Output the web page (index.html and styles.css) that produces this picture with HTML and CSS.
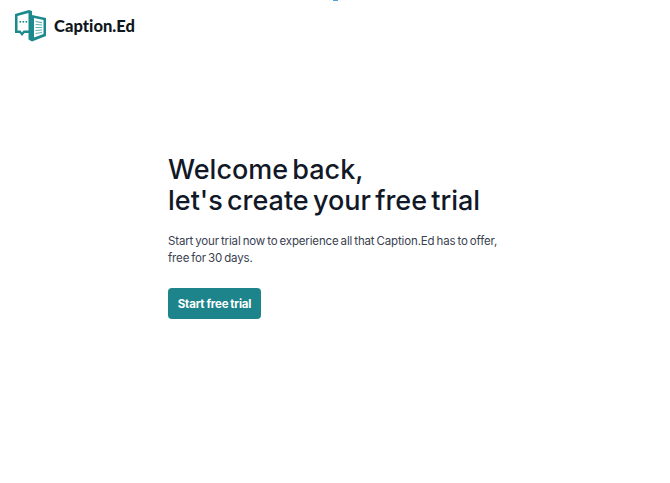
FILE: index.html
```html
<!DOCTYPE html>
<html lang="en">
<head>
    <meta charset="UTF-8">
    <meta name="viewport" content="width=device-width, initial-scale=1.0">
    <title>Caption.Ed</title>
    <link rel="stylesheet" href="styles.css">
</head>
<body>
    <div class="top-dot"></div>
    <header class="header">
        <svg class="logo-icon" width="32" height="32" viewBox="0 0 32 32">
            <path fill-rule="evenodd" d="M0 4 L14 0 L17 1 V31.5 L13.5 29.5 V23 H9.5 L7 26 L4.5 23 H0 Z M2.5 6 V20.5 H5.5 L7 22.5 L8.5 20.5 H13.5 V3 Z" fill="#1c8a8c"/>
            <path fill-rule="evenodd" d="M17 5 L31 8 V26 L17 31.5 Z M19 8 V27.5 L28.5 24 V10 Z" fill="#1c8a8c"/>
            <rect x="4.5" y="11" width="1.6" height="1.6" fill="#1c8a8c"/>
            <rect x="7.5" y="11" width="1.6" height="1.6" fill="#1c8a8c"/>
            <rect x="10.5" y="11" width="1.6" height="1.6" fill="#1c8a8c"/>
            <path d="M20.5 11.5 L27 12.6 M20.5 14.5 L27 15 M20.5 17.5 L27 17.5 M20.5 20.5 L27 20 M20.5 23.5 L27 22.5" stroke="#5fb0b2" stroke-width="1.2"/>
        </svg>
        <span class="logo-text">Caption.Ed</span>
    </header>
    <main class="content">
        <h1 class="title">Welcome back,<br>let's create your free trial</h1>
        <p class="desc">Start your trial now to experience all that Caption.Ed has to offer, free for 30 days.</p>
        <button class="start-button">Start free trial</button>
    </main>
</body>
</html>
```
FILE: styles.css
```css
body{
    margin: 0;
    background-color: #ffffff;
    font-family: "Inter", "Liberation Sans", sans-serif;
    color: #111827;
}
.top-dot{
    position: absolute;
    left: 333px;
    top: 0;
    width: 5px;
    height: 1px;
    background-color: #4aa3e0;
}
.header{
    display: flex;
    align-items: center;
    gap: 7px;
    padding: 10px 0 0 15px;
    height: 32px;
}
.logo-text{
    font-family: "Lato", sans-serif;
    font-size: 16.5px;
    font-weight: 900;
    letter-spacing: 0.05px;
    color: #0f1720;
}
.content{
    width: 335px;
    margin: 112px 0 0 168px;
}
.title{
    margin: 0;
    font-size: 27px;
    line-height: 31px;
    font-weight: 500;
    letter-spacing: 0;
    word-spacing: -3px;
}
.desc{
    margin: 17px 0 0 0;
    font-size: 11.5px;
    line-height: 16.5px;
    letter-spacing: -0.15px;
    word-spacing: -1px;
    color: #3a4150;
}
.start-button{
    display: block;
    margin-top: 22px;
    width: 93px;
    height: 31px;
    padding: 0;
    border: none;
    border-radius: 4px;
    background-color: #1c848a;
    color: #ffffff;
    font-family: "Inter", sans-serif;
    font-size: 11.5px;
    font-weight: 700;
    letter-spacing: -0.2px;
    word-spacing: -0.5px;
    cursor: pointer;
}
```
